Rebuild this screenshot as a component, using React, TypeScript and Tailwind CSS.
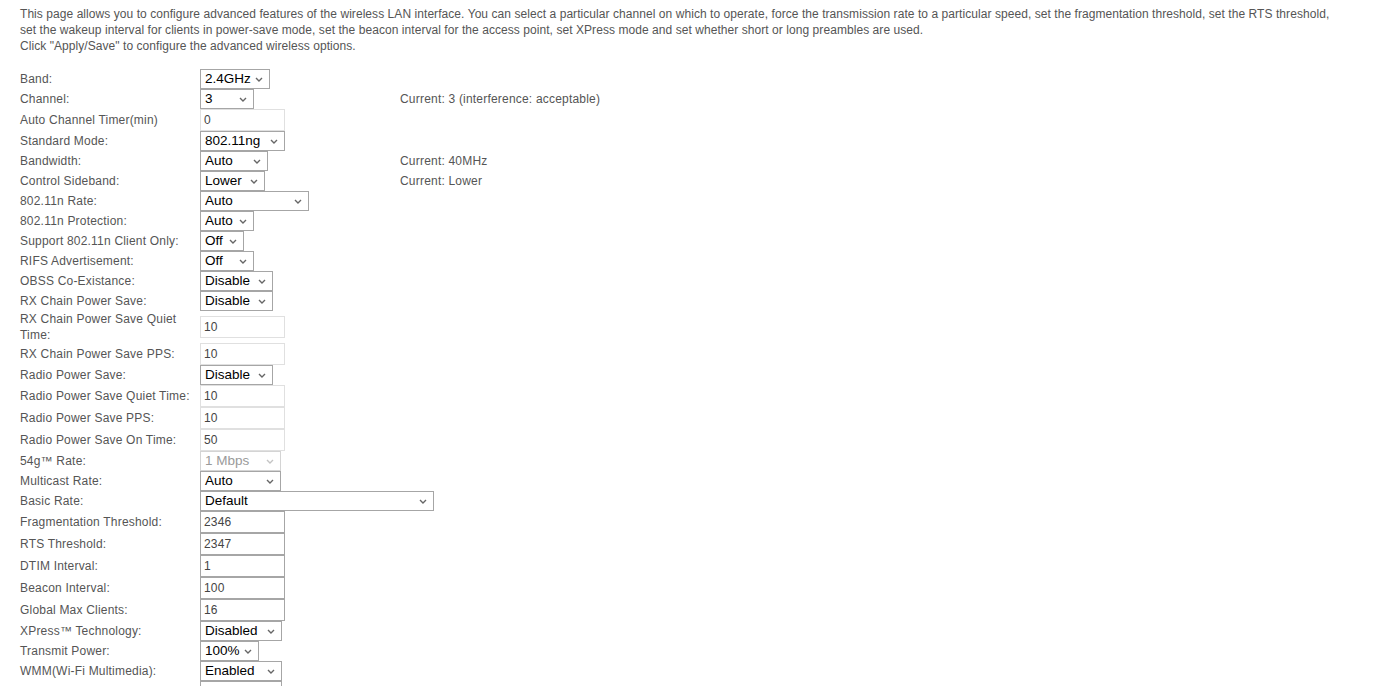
import type { ReactNode } from "react";

// Advanced wireless settings form — router admin page style.
type Row = {
  label: ReactNode;
  kind: "select" | "input";
  value: string;
  w?: string;
  light?: boolean;
  disabled?: boolean;
  current?: string;
  tall?: boolean;
};

const rows: Row[] = [
  { label: "Band:", kind: "select", value: "2.4GHz", w: "w-[70px]" },
  { label: "Channel:", kind: "select", value: "3", w: "w-[54px]", current: "Current: 3 (interference: acceptable)" },
  { label: "Auto Channel Timer(min)", kind: "input", value: "0", light: true },
  { label: "Standard Mode:", kind: "select", value: "802.11ng", w: "w-[85px]" },
  { label: "Bandwidth:", kind: "select", value: "Auto", w: "w-[68px]", current: "Current: 40MHz" },
  { label: "Control Sideband:", kind: "select", value: "Lower", w: "w-[65px]", current: "Current: Lower" },
  { label: "802.11n Rate:", kind: "select", value: "Auto", w: "w-[109px]" },
  { label: "802.11n Protection:", kind: "select", value: "Auto", w: "w-[54px]" },
  { label: "Support 802.11n Client Only:", kind: "select", value: "Off", w: "w-[44px]" },
  { label: "RIFS Advertisement:", kind: "select", value: "Off", w: "w-[54px]" },
  { label: "OBSS Co-Existance:", kind: "select", value: "Disable", w: "w-[73px]" },
  { label: "RX Chain Power Save:", kind: "select", value: "Disable", w: "w-[73px]" },
  {
    label: (
      <>
        RX Chain Power Save Quiet
        <br />
        Time:
      </>
    ),
    kind: "input",
    value: "10",
    light: true,
    tall: true,
  },
  { label: "RX Chain Power Save PPS:", kind: "input", value: "10", light: true },
  { label: "Radio Power Save:", kind: "select", value: "Disable", w: "w-[73px]" },
  { label: "Radio Power Save Quiet Time:", kind: "input", value: "10", light: true },
  { label: "Radio Power Save PPS:", kind: "input", value: "10", light: true },
  { label: "Radio Power Save On Time:", kind: "input", value: "50", light: true },
  { label: "54g™ Rate:", kind: "select", value: "1 Mbps", w: "w-[81px]", disabled: true },
  { label: "Multicast Rate:", kind: "select", value: "Auto", w: "w-[81px]" },
  { label: "Basic Rate:", kind: "select", value: "Default", w: "w-[234px]" },
  { label: "Fragmentation Threshold:", kind: "input", value: "2346" },
  { label: "RTS Threshold:", kind: "input", value: "2347" },
  { label: "DTIM Interval:", kind: "input", value: "1" },
  { label: "Beacon Interval:", kind: "input", value: "100" },
  { label: "Global Max Clients:", kind: "input", value: "16" },
  { label: "XPress™ Technology:", kind: "select", value: "Disabled", w: "w-[82px]" },
  { label: "Transmit Power:", kind: "select", value: "100%", w: "w-[59px]" },
  { label: "WMM(Wi-Fi Multimedia):", kind: "select", value: "Enabled", w: "w-[82px]" },
  { label: "WMM No Acknowledgement:", kind: "select", value: "Disabled", w: "w-[82px]" },
];

function Chevron({ muted }: { muted?: boolean }) {
  return (
    <svg width="8" height="5" viewBox="0 0 8 5" className="shrink-0">
      <path d="M1 1 L4 4 L7 1" fill="none" stroke={muted ? "#c4c4c4" : "#666"} strokeWidth="1.4" />
    </svg>
  );
}

function FakeSelect({ value, w, disabled }: { value: string; w?: string; disabled?: boolean }) {
  return (
    <div
      className={`${w} flex h-[20px] items-center justify-between border pl-[4px] pr-[6px] text-[13.5px] leading-none tracking-normal ${
        disabled ? "border-[#d4d4d4] text-[#9a9a9a]" : "border-[#a6a6a6] text-black"
      }`}
      style={{ fontFamily: '"Liberation Sans", Arial, sans-serif' }}
    >
      <span>{value}</span>
      <Chevron muted={disabled} />
    </div>
  );
}

function FakeInput({ value, light }: { value: string; light?: boolean }) {
  return (
    <div
      className={`flex h-[22px] w-[85px] items-center border pl-[3px] text-[12px] text-[#444] ${
        light ? "border-[#e0e0e0]" : "border-[#a6a6a6]"
      }`}
    >
      {value}
    </div>
  );
}

export default function App() {
  return (
    <div
      className="min-h-screen bg-white px-5 pt-[6px] text-[12px] tracking-[0.2px] text-[#555]"
      style={{ fontFamily: '"Liberation Sans", Arial, sans-serif' }}
    >
      <div className="whitespace-nowrap leading-[16px] tracking-[0.06px]">
        <p>
          This page allows you to configure advanced features of the wireless LAN interface. You can select a particular
          channel on which to operate, force the transmission rate to a particular speed, set the fragmentation threshold,
          set the RTS threshold,
        </p>
        <p>
          set the wakeup interval for clients in power-save mode, set the beacon interval for the access point, set XPress
          mode and set whether short or long preambles are used.
        </p>
        <p>Click "Apply/Save" to configure the advanced wireless options.</p>
      </div>

      <div className="mt-[15px] grid grid-cols-[180px_200px_1fr]">
        {rows.map((r, i) => (
          <div
            key={i}
            className={`col-span-3 grid grid-cols-subgrid items-center ${
              r.tall ? "h-[32px]" : r.kind === "input" ? "h-[22px]" : "h-[20px]"
            }`}
          >
            <div className={r.tall ? "leading-[16px]" : "whitespace-nowrap leading-[16px]"}>{r.label}</div>
            <div>
              {r.kind === "select" ? (
                <FakeSelect value={r.value} w={r.w} disabled={r.disabled} />
              ) : (
                <FakeInput value={r.value} light={r.light} />
              )}
            </div>
            <div className="whitespace-nowrap">{r.current}</div>
          </div>
        ))}
      </div>
    </div>
  );
}
